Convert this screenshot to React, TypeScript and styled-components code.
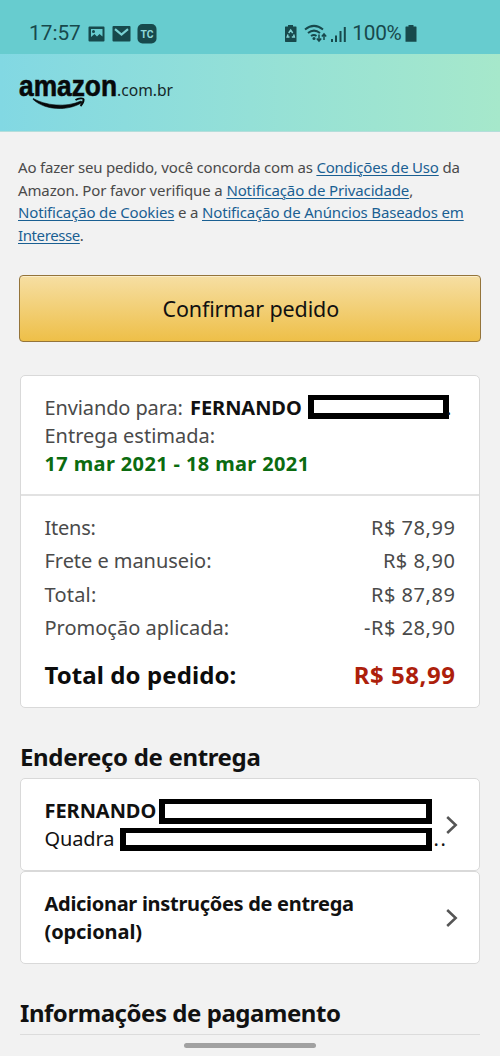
import React from 'react';
import styled, { createGlobalStyle } from 'styled-components';

const Global = createGlobalStyle`
  * { box-sizing: border-box; }
  body { margin: 0; background: #f2f2f2; color: #111; font-family: "Noto Sans", "Open Sans", sans-serif; }
  h2, p { margin: 0; }
`;

const Screen = styled.main`
  width: 500px;
  height: 1056px;
  overflow: hidden;
  display: flex;
  flex-direction: column;
  background: #f2f2f2;
`;

const StatusBar = styled.div`
  height: 54px;
  flex: none;
  display: flex;
  justify-content: space-between;
  align-items: flex-start;
  padding: 21px 83.5px 0 29px;
  background: #67cccf;
  color: #17494c;
  font: 400 20.8px/25px Roboto, sans-serif;
`;

const StatusGroup = styled.div`
  display: flex;
  align-items: center;
  height: 25px;
`;

const StatusText = styled.span<{ $w: number; $ls?: number }>`
  width: ${p => p.$w}px;
  letter-spacing: ${p => p.$ls ?? 0}px;
  white-space: nowrap;
`;

const Header = styled.header`
  height: 78px;
  flex: none;
  padding: 20px 0 0 18px;
  background: linear-gradient(90deg, #82d8e3 0%, #a6e8cb 100%);
  border-bottom: 1px solid #b4dedb;
`;

const Content = styled.div`
  flex: 1;
  display: flex;
  flex-direction: column;
  padding: 24px 20px 0;
`;

const Terms = styled.p`
  margin: 0 -10px 0 -2px;
  font-size: 15px;
  line-height: 22.7px;
  color: #4a4a4a;
`;

const TermsLine = styled.span<{ $ls: number }>`
  display: block;
  white-space: nowrap;
  letter-spacing: ${p => p.$ls}px;
`;

const Link = styled.a`
  color: #1a5f92;
  text-decoration: underline;
  text-decoration-thickness: 1px;
  text-underline-offset: 2px;
`;

const Confirm = styled.button`
  flex: none;
  height: 67px;
  margin: 28px -1px 0;
  padding: 2px 0 0 1.5px;
  border: 1px solid #94743a;
  border-radius: 4px;
  background: linear-gradient(#f6dfa3, #eebf48);
  box-shadow: inset 0 1px 0 #fbeec9;
  color: #111;
  font: 400 21.5px/30px "Noto Sans", sans-serif;
  letter-spacing: -0.13px;
`;

const Card = styled.section<{ $mt?: number }>`
  flex: none;
  margin-top: ${p => p.$mt ?? 0}px;
  background: #fff;
  border: 1px solid #d9d9d9;
  border-radius: 5px;
`;

const Shipping = styled.div`
  height: 120px;
  padding: 18px 24px 0 23.5px;
  border-bottom: 2px solid #e2e2e2;
`;

const Line = styled.div<{ $bold?: boolean; $color?: string; $ls?: number }>`
  display: flex;
  height: 28px;
  align-items: center;
  white-space: nowrap;
  font-size: 20px;
  line-height: 28px;
  font-weight: ${p => (p.$bold ? 700 : 400)};
  color: ${p => p.$color ?? '#111'};
  letter-spacing: ${p => p.$ls ?? -0.12}px;
`;

const Name = styled.b<{ $w: number }>`
  flex: none;
  width: ${p => p.$w}px;
  color: #111;
  letter-spacing: -0.05px;
`;

const Label = styled.span<{ $w: number }>`
  flex: none;
  width: ${p => p.$w}px;
`;

const Redaction = styled.span<{ $w: number; $h: number; $shift?: number }>`
  flex: none;
  width: ${p => p.$w}px;
  height: ${p => p.$h}px;
  margin-top: ${p => p.$shift ?? 0}px;
  border: 6px solid #000;
  border-top-width: 5px;
  background: #fff;
`;

const Ellipsis = styled.span`
  margin-left: 2px;
  letter-spacing: 1.7px;
`;

const EndDot = styled.span`
  margin-left: -3px;
  color: #111;
`;

const Costs = styled.div`
  height: 211px;
  padding: 15px 24px 0 23.5px;
`;

const Row = styled.div<{ $total?: boolean; $ls: number }>`
  display: flex;
  justify-content: space-between;
  align-items: center;
  height: ${p => (p.$total ? 60 : 33.3)}px;
  font-size: ${p => (p.$total ? 24 : 20)}px;
  font-weight: ${p => (p.$total ? 700 : 400)};
  color: ${p => (p.$total ? '#0c0c0c' : '#4a4a4a')};
  letter-spacing: ${p => p.$ls}px;
`;

const Price = styled.span<{ $red?: boolean }>`
  letter-spacing: 0.55px;
  margin-right: -0.5px;
  ${p => p.$red && 'color: #ad1f0c;'}
`;

const Heading = styled.h2<{ $mt: number; $ls: number }>`
  flex: none;
  margin-top: ${p => p.$mt}px;
  font-size: 24px;
  line-height: 34px;
  font-weight: 700;
  letter-spacing: ${p => p.$ls}px;
`;

const Option = styled(Card)`
  height: 93px;
  display: flex;
  align-items: center;
  justify-content: space-between;
  padding: 2px 22px 0 23.5px;
`;

const OptionText = styled.div`
  width: 401px;
  flex: none;
`;

const Arrow = styled.svg`
  flex: none;
  width: 12px;
  height: 20px;
`;

const LogoMark = styled.svg`
  display: block;
  overflow: visible;
`;

const Footer = styled.footer`
  flex: none;
  height: 22px;
  display: flex;
  justify-content: center;
  padding-top: 8px;
  border-top: 1px solid #dcdcdc;
  margin: 0 20px;
`;

const HomeBar = styled.div`
  width: 132px;
  height: 5px;
  border-radius: 3px;
  background: #a1a1a1;
`;

const Chevron = () => (
  <Arrow viewBox="0 0 12 20">
    <path d="M1.2 2L9.700 10L1.2 18" fill="none" stroke="#555" strokeWidth="2.500" />
  </Arrow>
);

const Logo = () => (
  <LogoMark width="160" height="40" viewBox="0 0 160 40">
    <text x="1" y="22" textLength="98" lengthAdjust="spacingAndGlyphs" fontFamily="Liberation Sans" fontWeight="700" fontSize="30" fill="#07090a" stroke="#07090a" strokeWidth=".6">amazon</text>
    <text x="99" y="22" textLength="56" lengthAdjust="spacingAndGlyphs" fontFamily="Noto Sans" fontSize="16.500" fill="#14282a">.com.br</text>
    <path d="M15.300 24.500C27 31.500 48 34 63 27L64.500 28.300C50 37.500 27 36.500 15 25.300Z" fill="#07090a" stroke="#07090a" strokeWidth=".6" />
    <path d="M57.500 26C61 23.800 65.300 24 65.600 25.300C65.700 27.800 64.500 30 62.500 32" fill="none" stroke="#07090a" strokeWidth="1.900" />
  </LogoMark>
);

const NotificationIcons = () => (
  <svg width="72" height="22" viewBox="0 0 72 22">
    <path fillRule="evenodd" fill="#17494c" d="M2.500 3.500H16.500Q17.500 3.500 17.500 4.500V17.500Q17.500 18.500 16.500 18.500H2.500Q1.500 18.500 1.500 17.500V4.500Q1.500 3.500 2.500 3.500ZM4 6V14L7.500 11L10 13.500L12.500 11L15.500 13.500V6Z" />
    <circle cx="6.500" cy="8.500" r="1.500" fill="#17494c" />
    <rect x="25.500" y="3" width="18" height="15.500" rx="1" fill="#17494c" />
    <path d="M28 6.200L34.500 11.500L41 6.200" fill="none" stroke="#79d0d2" strokeWidth="2.200" />
    <rect x="50.500" y="1" width="19" height="19.500" rx="5" fill="#17494c" />
    <text x="53.500" y="15" textLength="13" lengthAdjust="spacingAndGlyphs" fontFamily="Roboto" fontWeight="700" fontSize="11.500" fill="#8fd7d8">TC</text>
  </svg>
);

const SignalIcons = () => (
  <svg width="64" height="22" viewBox="0 0 64 22" fill="#17494c">
    <path d="M4 3.500V2H9V3.500H12Q12.500 3.500 12.500 4.200V18.300Q12.500 19 12 19H1.500Q1 19 1 18.300V4.200Q1 3.500 1.500 3.500Z" />
    <path d="M4.700 10L6.700 7L8.700 10M9.700 11.500L10.300 14H7.800M5.500 14H3.200L4 11.500" fill="none" stroke="#83d2d3" strokeWidth="1.500" />
    <g fill="none" stroke="#17494c" strokeWidth="2">
      <path d="M21 6.500Q30 -.8 39 6.500" />
      <path d="M24 10Q30 5.300 36 10" />
      <path d="M27 13Q30 11 32.500 13" />
    </g>
    <circle cx="30" cy="15.500" r="1.500" />
    <path d="M35 11.500V18M32.800 15.500L35 18L37.200 15.500M40 17V11M37.800 13.500L40 11L42.200 13.500" fill="none" stroke="#17494c" strokeWidth="1.500" />
    <path d="M47 16H49V19H47ZM51 12.500H53V19H51ZM55.500 8H57.500V19H55.500ZM59.800 4H61.800V19H59.800Z" />
  </svg>
);

const Battery = () => (
  <svg width="12" height="22" viewBox="0 0 12 22">
    <path d="M3.500 3.500V2H8.500V3.500H11Q11.500 3.500 11.500 4.200V18.800H.5V4.200Q.5 3.500 1 3.500Z" fill="#17494c" />
  </svg>
);

const costs = [
  { label: 'Itens:', value: 'R$ 78,99', spacing: -0.25 },
  { label: 'Frete e manuseio:', value: 'R$ 8,90', spacing: -0.05 },
  { label: 'Total:', value: 'R$ 87,89', spacing: 0.2 },
  { label: 'Promoção aplicada:', value: '-R$ 28,90', spacing: 0 },
];

export default function App() {
  return (
    <Screen>
      <Global />
      <StatusBar>
        <StatusGroup>
          <StatusText $w={57.5}>17:57</StatusText>
          <NotificationIcons />
        </StatusGroup>
        <StatusGroup>
          <SignalIcons />
          <StatusText $w={57} $ls={-0.3}>&nbsp;100%</StatusText>
          <Battery />
        </StatusGroup>
      </StatusBar>
      <Header><Logo /></Header>
      <Content>
        <Terms>
          <TermsLine $ls={-0.2}>Ao fazer seu pedido, você concorda com as <Link>Condições de Uso</Link> da</TermsLine>
          <TermsLine $ls={-0.13}>Amazon. Por favor verifique a <Link>Notificação de Privacidade</Link>,</TermsLine>
          <TermsLine $ls={-0.16}><Link>Notificação de Cookies</Link> e a <Link>Notificação de Anúncios Baseados em</Link></TermsLine>
          <TermsLine $ls={-0.4}><Link>Interesse</Link>.</TermsLine>
        </Terms>
        <Confirm>Confirmar pedido</Confirm>
        <Card $mt={33}>
          <Shipping>
            <Line $color="#4a4a4a">
              <Label $w={145.5}>Enviando para:</Label>
              <Name $w={118}>FERNANDO</Name>
              <Redaction $w={141} $h={24} $shift={-2} />
              <EndDot>.</EndDot>
            </Line>
            <Line $color="#4a4a4a" $ls={0}>Entrega estimada:</Line>
            <Line $bold $color="#0b6b10" $ls={0.37}>17 mar 2021 - 18 mar 2021</Line>
          </Shipping>
          <Costs>
            {costs.map(c => (
              <Row key={c.label} $ls={c.spacing}><span>{c.label}</span><Price>{c.value}</Price></Row>
            ))}
            <Row $total $ls={0.08}><span>Total do pedido:</span><Price $red>R$ 58,99</Price></Row>
          </Costs>
        </Card>
        <Heading $mt={32} $ls={-0.34}>Endereço de entrega</Heading>
        <Option $mt={4}>
          <OptionText>
            <Line><Name $w={114}>FERNANDO</Name><Redaction $w={273} $h={25} /></Line>
            <Line><Label $w={75.5}>Quadra</Label><Redaction $w={311.5} $h={23} /><Ellipsis>..</Ellipsis></Line>
          </OptionText>
          <Chevron />
        </Option>
        <Option>
          <OptionText>
            <Line $bold $ls={-0.3}>Adicionar instruções de entrega</Line>
            <Line $bold $ls={-0.1}>(opcional)</Line>
          </OptionText>
          <Chevron />
        </Option>
        <Heading $mt={32} $ls={-0.45}>Informações de pagamento</Heading>
      </Content>
      <Footer><HomeBar /></Footer>
    </Screen>
  );
}
